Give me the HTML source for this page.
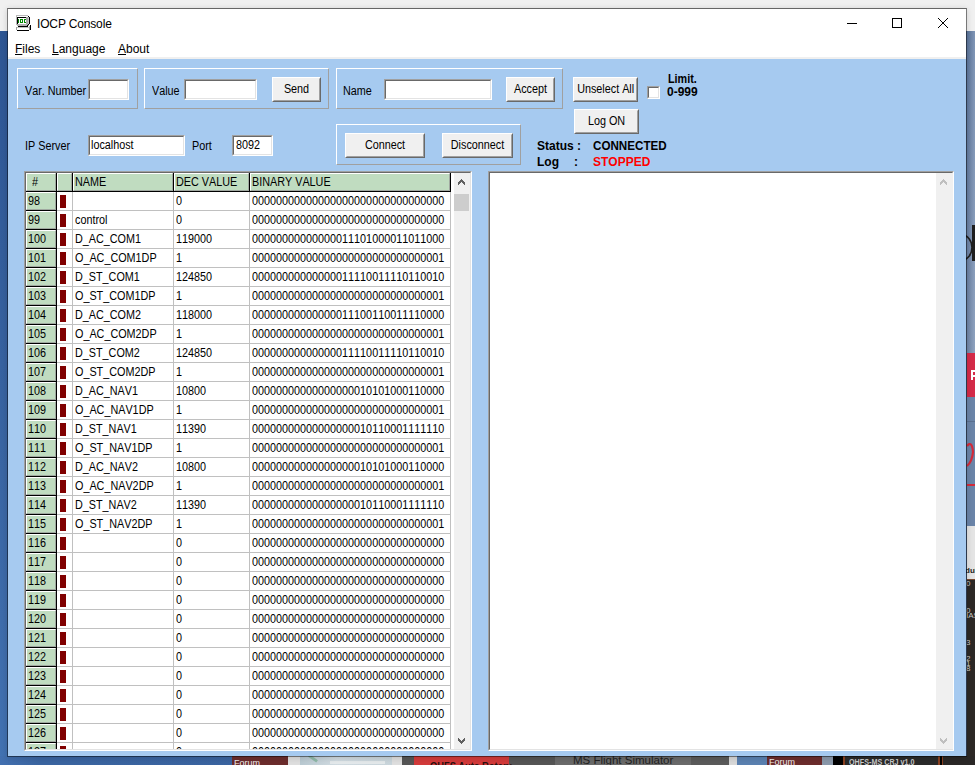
<!DOCTYPE html>
<html><head><meta charset="utf-8"><style>
html,body{margin:0;padding:0;}
body{width:975px;height:765px;overflow:hidden;position:relative;background:#3a64a0;font-family:"Liberation Sans", sans-serif;}
div{position:absolute;}
.t{font-size:12px;line-height:14px;white-space:nowrap;color:#000;font-kerning:none;transform:scaleX(0.9);transform-origin:0 0;}
.c{transform-origin:50% 0;}
.b{font-weight:bold;}
</style></head><body>

<div style="left:0;top:0;width:975px;height:31px;background:#f0f0f0"></div>
<div style="left:0;top:31px;width:8px;height:734px;background:linear-gradient(#2e5694,#3a66a4 60%,#4272b2)"></div>
<div style="left:966px;top:31px;width:9px;height:734px;background:linear-gradient(to right,#566f96,#8096b6)"></div>
<div style="left:966px;top:31px;width:9px;height:322px;background:linear-gradient(rgba(255,255,255,0),rgba(255,255,255,0.12))"></div>
<svg style="position:absolute;left:966px;top:220px" width="9" height="45" viewBox="966 220 9 45"><ellipse cx="962" cy="247.5" rx="10" ry="12.5" fill="none" stroke="#1e1e1e" stroke-width="1.6"/><rect x="972" y="225" width="3" height="36" fill="#1e1e1e"/></svg>
<div style="left:967px;top:353px;width:8px;height:44px;background:#d42a48"></div>
<div style="left:971px;top:370px;width:2px;height:10px;background:#fff"></div><div style="left:971px;top:370px;width:4px;height:2px;background:#fff"></div><div style="left:971px;top:375px;width:4px;height:2px;background:#fff"></div>
<div style="left:967px;top:397px;width:8px;height:129px;background:#6a84a8"></div>
<div style="left:967px;top:421px;width:8px;height:1px;background:#5a7090"></div>
<svg style="position:absolute;left:966px;top:440px" width="9" height="50" viewBox="966 440 9 50"><path d="M967 446 Q972 440 973 452 Q972 462 967 466" fill="none" stroke="#d42a3a" stroke-width="2.2"/><rect x="967" y="484" width="8" height="2" fill="#d42a3a"/></svg>
<div style="left:967px;top:526px;width:8px;height:53px;background:#e4e4e4"></div>
<div style="left:965px;top:566px;font-size:8px;line-height:10px;font-weight:bold;color:#222;white-space:nowrap">dul</div>
<div style="left:967px;top:579px;width:8px;height:1px;background:#7a4a30"></div>
<div style="left:967px;top:580px;width:8px;height:185px;background:#2c2826"></div>
<div style="left:966px;top:580px;font-size:8px;line-height:8px;color:#c8c8c8;white-space:nowrap">0</div>
<div style="left:966px;top:607px;font-size:8px;line-height:8px;color:#c8c8c8;white-space:nowrap">0</div>
<div style="left:966px;top:612px;font-size:8px;line-height:8px;color:#c8c8c8;white-space:nowrap">IAS</div>
<div style="left:966px;top:639px;font-size:8px;line-height:8px;color:#c8c8c8;white-space:nowrap">3</div>
<div style="left:966px;top:655px;font-size:8px;line-height:8px;color:#c8c8c8;white-space:nowrap">2</div>
<div style="left:966px;top:660px;font-size:8px;line-height:8px;color:#c8c8c8;white-space:nowrap">1</div>
<div style="left:966px;top:665px;font-size:8px;line-height:8px;color:#c8c8c8;white-space:nowrap">8</div>
<div style="left:0;top:756px;width:975px;height:9px;background:linear-gradient(to right,#4270b0,#3a64a0 40px,#38629c)"></div>
<div style="left:232px;top:756px;width:56px;height:9px;background:#6b2c2c"></div>
<div style="left:288px;top:756px;width:12px;height:9px;background:#dedede"></div>
<div style="left:300px;top:756px;width:92px;height:9px;background:linear-gradient(to right,#b8c8d0,#d0dae0 40%,#c8d4da)"></div>
<div style="left:392px;top:756px;width:10px;height:9px;background:#dedede"></div>
<div style="left:402px;top:756px;width:12px;height:9px;background:#555"></div>
<div style="left:414px;top:756px;width:95px;height:9px;background:#d23a3a"></div>
<div style="left:509px;top:756px;width:46px;height:9px;background:#555"></div>
<div style="left:555px;top:756px;width:136px;height:9px;background:#6a6a6a"></div>
<div style="left:691px;top:756px;width:38px;height:9px;background:#5a5a5a"></div>
<div style="left:729px;top:756px;width:8px;height:9px;background:#d8d8d8"></div>
<div style="left:737px;top:756px;width:30px;height:9px;background:#5a80b0"></div>
<div style="left:767px;top:756px;width:55px;height:9px;background:#6b2c2c"></div>
<div style="left:822px;top:756px;width:11px;height:9px;background:#8a98aa"></div>
<div style="left:833px;top:756px;width:10px;height:9px;background:#000"></div>
<div style="left:843px;top:756px;width:2px;height:9px;background:#8a4020"></div>
<div style="left:845px;top:756px;width:93px;height:9px;background:#2a2a2a"></div>
<div style="left:938px;top:756px;width:2px;height:9px;background:#8a4020"></div>
<div style="left:940px;top:756px;width:2px;height:9px;background:#000"></div>
<div style="left:942px;top:756px;width:1px;height:9px;background:#8a4020"></div>
<div style="left:943px;top:756px;width:32px;height:9px;background:#2a2726"></div>
<div style="left:308px;top:757px;width:10px;height:3px;background:#8fb8a8;transform:rotate(35deg)"></div>
<div style="left:330px;top:761px;width:55px;height:3px;background:#e8ecee;opacity:0.8"></div>
<div style="left:234px;top:757px;font-size:9px;line-height:12px;color:#eee;white-space:nowrap">Forum</div>
<div style="left:769px;top:756px;font-size:9px;line-height:12px;color:#eee;white-space:nowrap">Forum</div>
<div style="left:430px;top:760px;font-size:11px;line-height:12px;color:#2a1010;font-weight:bold;white-space:nowrap;transform:scaleX(0.85);transform-origin:0 0">OHFS Auto Rotary</div>
<div style="left:573px;top:753px;font-size:11.5px;line-height:14px;color:#222;white-space:nowrap">MS Flight Simulator</div>
<div style="left:849px;top:757px;font-size:9px;line-height:10px;color:#c8c8c8;font-weight:bold;white-space:nowrap;transform:scaleX(0.8);transform-origin:0 0">OHFS-MS CRJ v1.0</div>
<div style="left:7px;top:8px;width:960px;height:749px;box-sizing:border-box;border:1px solid rgba(0,0,0,0.45);border-top-color:#666;background:#a6caf0;background-clip:padding-box;box-shadow:0 1px 6px rgba(0,0,0,0.15)"></div>
<div style="left:8px;top:9px;width:958px;height:48px;background:#fff"></div>
<div style="left:8px;top:57px;width:958px;height:2px;background:#f0f0f0"></div>
<svg style="position:absolute;left:14px;top:13px" width="20" height="20" viewBox="0 0 20 20" shape-rendering="crispEdges">
<rect x="2" y="2" width="12" height="1" fill="#b8b8b8"/>
<rect x="2" y="3" width="1" height="9" fill="#b8b8b8"/>
<rect x="3" y="3" width="11" height="1" fill="#fff"/>
<rect x="3" y="4" width="10" height="8" fill="#d8d8d8"/>
<rect x="3" y="4" width="10" height="1" fill="#000"/>
<rect x="3" y="4" width="1" height="8" fill="#000"/>
<rect x="4" y="5" width="8" height="6" fill="#fff"/>
<rect x="4" y="6" width="1" height="4" fill="#080"/>
<rect x="6" y="6" width="3" height="4" fill="#080"/><rect x="7" y="7" width="1" height="2" fill="#fff"/>
<rect x="10" y="6" width="2" height="4" fill="#080"/><rect x="11" y="7" width="1" height="2" fill="#fff"/>
<rect x="12" y="4" width="2" height="8" fill="#a8a8a8"/>
<rect x="14" y="3" width="1" height="1" fill="#000"/>
<rect x="15" y="4" width="1" height="7" fill="#000"/>
<rect x="14" y="4" width="1" height="8" fill="#c8c8c8"/>
<rect x="3" y="11" width="12" height="2" fill="#b0b0b0"/>
<rect x="4" y="13" width="10" height="1" fill="#000"/>
<rect x="2" y="14" width="13" height="1" fill="#c0c0c0"/>
<rect x="2" y="15" width="13" height="2" fill="#fff"/><rect x="2" y="14" width="1" height="3" fill="#a0a0a0"/>
<rect x="3" y="17" width="12" height="1" fill="#000"/>
<rect x="16" y="12" width="1" height="5" fill="#000"/>
<rect x="15" y="13" width="1" height="4" fill="#a0a0a0"/><rect x="14" y="11" width="1" height="1" fill="#000"/><rect x="13" y="12" width="1" height="1" fill="#000"/>
</svg>
<div style="left:37px;top:17px;font-size:12px;line-height:14px;color:#000;white-space:nowrap;letter-spacing:-0.15px">IOCP Console</div>
<div style="left:847px;top:23px;width:10px;height:1px;background:#000"></div>
<div style="left:892px;top:18px;width:10px;height:10px;box-sizing:border-box;border:1px solid #000"></div>
<svg style="position:absolute;left:937px;top:17px" width="12" height="12" viewBox="0 0 12 12"><path d="M1 1L11 11M11 1L1 11" stroke="#000" stroke-width="1"/></svg>
<div style="left:15px;top:42px;font-size:12px;line-height:14px;white-space:nowrap"><span style="text-decoration:underline">F</span>iles</div>
<div style="left:52px;top:42px;font-size:12px;line-height:14px;white-space:nowrap"><span style="text-decoration:underline">L</span>anguage</div>
<div style="left:118px;top:42px;font-size:12px;line-height:14px;white-space:nowrap"><span style="text-decoration:underline">A</span>bout</div>
<div style="left:17px;top:68px;width:120px;height:40px;border-top:1px solid #fff;border-left:1px solid #fff;border-right:1px solid #a0a0a0;border-bottom:1px solid #a0a0a0;box-sizing:border-box;width:121px;height:41px"></div>
<div class="t" style="left:25px;top:84px;">Var. Number</div>
<div style="left:88px;top:79px;width:41px;height:21px;box-sizing:border-box;border-style:solid;border-width:1px;border-color:#a0a0a0 #fff #fff #a0a0a0;background:#fff"><div style="position:absolute;left:0;top:0;right:0;bottom:0;border-style:solid;border-width:1px;border-color:#696969 #e3e3e3 #e3e3e3 #696969"></div></div>
<div style="left:144px;top:68px;width:184px;height:40px;border-top:1px solid #fff;border-left:1px solid #fff;border-right:1px solid #a0a0a0;border-bottom:1px solid #a0a0a0;box-sizing:border-box;width:185px;height:41px"></div>
<div class="t" style="left:152px;top:84px;">Value</div>
<div style="left:184px;top:79px;width:73px;height:21px;box-sizing:border-box;border-style:solid;border-width:1px;border-color:#a0a0a0 #fff #fff #a0a0a0;background:#fff"><div style="position:absolute;left:0;top:0;right:0;bottom:0;border-style:solid;border-width:1px;border-color:#696969 #e3e3e3 #e3e3e3 #696969"></div></div>
<div style="left:272px;top:77px;width:49px;height:25px;box-sizing:border-box;border-style:solid;border-width:1px;border-color:#fff #696969 #696969 #fff;background:#f0f0f0"><div style="position:absolute;left:0;top:0;right:0;bottom:0;border-style:solid;border-width:1px;border-color:#f0f0f0 #a0a0a0 #a0a0a0 #f0f0f0"></div><div class="t c" style="left:0;width:47px;top:4px;text-align:center">Send</div></div>
<div style="left:336px;top:68px;width:226px;height:40px;border-top:1px solid #fff;border-left:1px solid #fff;border-right:1px solid #a0a0a0;border-bottom:1px solid #a0a0a0;box-sizing:border-box;width:227px;height:41px"></div>
<div class="t" style="left:343px;top:84px;">Name</div>
<div style="left:384px;top:79px;width:108px;height:21px;box-sizing:border-box;border-style:solid;border-width:1px;border-color:#a0a0a0 #fff #fff #a0a0a0;background:#fff"><div style="position:absolute;left:0;top:0;right:0;bottom:0;border-style:solid;border-width:1px;border-color:#696969 #e3e3e3 #e3e3e3 #696969"></div></div>
<div style="left:506px;top:77px;width:49px;height:25px;box-sizing:border-box;border-style:solid;border-width:1px;border-color:#fff #696969 #696969 #fff;background:#f0f0f0"><div style="position:absolute;left:0;top:0;right:0;bottom:0;border-style:solid;border-width:1px;border-color:#f0f0f0 #a0a0a0 #a0a0a0 #f0f0f0"></div><div class="t c" style="left:0;width:47px;top:4px;text-align:center">Accept</div></div>
<div style="left:573px;top:77px;width:65px;height:25px;box-sizing:border-box;border-style:solid;border-width:1px;border-color:#fff #696969 #696969 #fff;background:#f0f0f0"><div style="position:absolute;left:0;top:0;right:0;bottom:0;border-style:solid;border-width:1px;border-color:#f0f0f0 #a0a0a0 #a0a0a0 #f0f0f0"></div><div class="t c" style="left:0;width:63px;top:4px;text-align:center">Unselect All</div></div>
<div style="left:647px;top:86px;width:13px;height:13px;box-sizing:border-box;border-style:solid;border-width:1px;border-color:#a0a0a0 #fff #fff #a0a0a0;background:#fff"><div style="position:absolute;left:0;top:0;right:0;bottom:0;border-style:solid;border-width:1px;border-color:#696969 #e3e3e3 #e3e3e3 #696969"></div></div>
<div class="t" style="left:668px;top:72px;font-weight:bold">Limit.</div>
<div class="t" style="left:667px;top:85px;font-weight:bold;transform:scaleY(1.06);transform-origin:0 100%">0-999</div>
<div style="left:574px;top:109px;width:65px;height:25px;box-sizing:border-box;border-style:solid;border-width:1px;border-color:#fff #696969 #696969 #fff;background:#f0f0f0"><div style="position:absolute;left:0;top:0;right:0;bottom:0;border-style:solid;border-width:1px;border-color:#f0f0f0 #a0a0a0 #a0a0a0 #f0f0f0"></div><div class="t c" style="left:0;width:63px;top:4px;text-align:center">Log ON</div></div>
<div class="t" style="left:25px;top:139px;">IP Server</div>
<div style="left:88px;top:135px;width:97px;height:21px;box-sizing:border-box;border-style:solid;border-width:1px;border-color:#a0a0a0 #fff #fff #a0a0a0;background:#fff"><div style="position:absolute;left:0;top:0;right:0;bottom:0;border-style:solid;border-width:1px;border-color:#696969 #e3e3e3 #e3e3e3 #696969"></div></div>
<div class="t" style="left:91px;top:138px;">localhost</div>
<div class="t" style="left:192px;top:139px;">Port</div>
<div style="left:232px;top:135px;width:41px;height:21px;box-sizing:border-box;border-style:solid;border-width:1px;border-color:#a0a0a0 #fff #fff #a0a0a0;background:#fff"><div style="position:absolute;left:0;top:0;right:0;bottom:0;border-style:solid;border-width:1px;border-color:#696969 #e3e3e3 #e3e3e3 #696969"></div></div>
<div class="t" style="left:236px;top:138px;">8092</div>
<div style="left:336px;top:124px;width:184px;height:40px;border-top:1px solid #fff;border-left:1px solid #fff;border-right:1px solid #a0a0a0;border-bottom:1px solid #a0a0a0;box-sizing:border-box;width:185px;height:41px"></div>
<div style="left:345px;top:133px;width:80px;height:25px;box-sizing:border-box;border-style:solid;border-width:1px;border-color:#fff #696969 #696969 #fff;background:#f0f0f0"><div style="position:absolute;left:0;top:0;right:0;bottom:0;border-style:solid;border-width:1px;border-color:#f0f0f0 #a0a0a0 #a0a0a0 #f0f0f0"></div><div class="t c" style="left:0;width:78px;top:4px;text-align:center">Connect</div></div>
<div style="left:442px;top:133px;width:71px;height:25px;box-sizing:border-box;border-style:solid;border-width:1px;border-color:#fff #696969 #696969 #fff;background:#f0f0f0"><div style="position:absolute;left:0;top:0;right:0;bottom:0;border-style:solid;border-width:1px;border-color:#f0f0f0 #a0a0a0 #a0a0a0 #f0f0f0"></div><div class="t c" style="left:0;width:69px;top:4px;text-align:center">Disconnect</div></div>
<div class="t" style="left:537px;top:139px;font-weight:bold;transform:none">Status :</div>
<div class="t" style="left:593px;top:139px;font-weight:bold;transform:scaleX(0.97)">CONNECTED</div>
<div class="t" style="left:537px;top:155px;font-weight:bold;transform:none">Log</div>
<div class="t" style="left:574px;top:155px;font-weight:bold;transform:none">:</div>
<div class="t" style="left:593px;top:155px;font-weight:bold;color:#f00;transform:none">STOPPED</div>
<div style="left:24px;top:171px;width:448px;height:580px;box-sizing:border-box;border-style:solid;border-width:1px;border-color:#a0a0a0 #fff #fff #a0a0a0;background:#fff"><div style="position:absolute;left:0;top:0;right:0;bottom:0;border-style:solid;border-width:1px;border-color:#696969 #e3e3e3 #e3e3e3 #696969"></div></div>
<div style="left:26px;top:173px;width:444px;height:576px;overflow:hidden;background:#fff"><div style="left:0px;top:0px;width:30px;height:18px;background:#c0dcc0;box-sizing:border-box;border-top:1px solid #fff;border-left:1px solid #fff;border-right:1px solid #a0a8a0;border-bottom:1px solid #a0a8a0"></div><div style="left:30px;top:0px;width:1px;height:19px;background:#000"></div><div style="left:31px;top:0px;width:15px;height:18px;background:#c0dcc0;box-sizing:border-box;border-top:1px solid #fff;border-left:1px solid #fff;border-right:1px solid #a0a8a0;border-bottom:1px solid #a0a8a0"></div><div style="left:46px;top:0px;width:1px;height:19px;background:#000"></div><div style="left:47px;top:0px;width:100px;height:18px;background:#c0dcc0;box-sizing:border-box;border-top:1px solid #fff;border-left:1px solid #fff;border-right:1px solid #a0a8a0;border-bottom:1px solid #a0a8a0"></div><div style="left:147px;top:0px;width:1px;height:19px;background:#000"></div><div style="left:148px;top:0px;width:75px;height:18px;background:#c0dcc0;box-sizing:border-box;border-top:1px solid #fff;border-left:1px solid #fff;border-right:1px solid #a0a8a0;border-bottom:1px solid #a0a8a0"></div><div style="left:223px;top:0px;width:1px;height:19px;background:#000"></div><div style="left:224px;top:0px;width:200px;height:18px;background:#c0dcc0;box-sizing:border-box;border-top:1px solid #fff;border-left:1px solid #fff;border-right:1px solid #a0a8a0;border-bottom:1px solid #a0a8a0"></div><div style="left:424px;top:0px;width:1px;height:19px;background:#000"></div><div style="left:0px;top:18px;width:425px;height:1px;background:#000"></div><div class="t" style="left:6px;top:2px;">#</div><div class="t" style="left:49px;top:2px;">NAME</div><div class="t" style="left:150px;top:2px;">DEC VALUE</div><div class="t" style="left:226px;top:2px;">BINARY VALUE</div><div style="left:0px;top:19px;width:30px;height:18px;background:#c0dcc0;box-sizing:border-box;border-top:1px solid #fff;border-left:1px solid #fff;border-right:1px solid #a0a8a0;border-bottom:1px solid #a0a8a0"></div><div style="left:30px;top:19px;width:1px;height:19px;background:#000"></div><div style="left:0px;top:37px;width:31px;height:1px;background:#000"></div><div style="left:31px;top:37px;width:394px;height:1px;background:#c0c0c0"></div><div style="left:46px;top:19px;width:1px;height:19px;background:#c0c0c0"></div><div style="left:147px;top:19px;width:1px;height:19px;background:#c0c0c0"></div><div style="left:223px;top:19px;width:1px;height:19px;background:#c0c0c0"></div><div style="left:424px;top:19px;width:1px;height:19px;background:#c0c0c0"></div><div style="left:34px;top:22px;width:6px;height:13px;background:#800000"></div><div class="t" style="left:2px;top:21px;">98</div><div class="t" style="left:150px;top:21px;">0</div><div class="t" style="left:226px;top:21px;">00000000000000000000000000000000</div><div style="left:0px;top:38px;width:30px;height:18px;background:#c0dcc0;box-sizing:border-box;border-top:1px solid #fff;border-left:1px solid #fff;border-right:1px solid #a0a8a0;border-bottom:1px solid #a0a8a0"></div><div style="left:30px;top:38px;width:1px;height:19px;background:#000"></div><div style="left:0px;top:56px;width:31px;height:1px;background:#000"></div><div style="left:31px;top:56px;width:394px;height:1px;background:#c0c0c0"></div><div style="left:46px;top:38px;width:1px;height:19px;background:#c0c0c0"></div><div style="left:147px;top:38px;width:1px;height:19px;background:#c0c0c0"></div><div style="left:223px;top:38px;width:1px;height:19px;background:#c0c0c0"></div><div style="left:424px;top:38px;width:1px;height:19px;background:#c0c0c0"></div><div style="left:34px;top:41px;width:6px;height:13px;background:#800000"></div><div class="t" style="left:2px;top:40px;">99</div><div class="t" style="left:49px;top:40px;">control</div><div class="t" style="left:150px;top:40px;">0</div><div class="t" style="left:226px;top:40px;">00000000000000000000000000000000</div><div style="left:0px;top:57px;width:30px;height:18px;background:#c0dcc0;box-sizing:border-box;border-top:1px solid #fff;border-left:1px solid #fff;border-right:1px solid #a0a8a0;border-bottom:1px solid #a0a8a0"></div><div style="left:30px;top:57px;width:1px;height:19px;background:#000"></div><div style="left:0px;top:75px;width:31px;height:1px;background:#000"></div><div style="left:31px;top:75px;width:394px;height:1px;background:#c0c0c0"></div><div style="left:46px;top:57px;width:1px;height:19px;background:#c0c0c0"></div><div style="left:147px;top:57px;width:1px;height:19px;background:#c0c0c0"></div><div style="left:223px;top:57px;width:1px;height:19px;background:#c0c0c0"></div><div style="left:424px;top:57px;width:1px;height:19px;background:#c0c0c0"></div><div style="left:34px;top:60px;width:6px;height:13px;background:#800000"></div><div class="t" style="left:2px;top:59px;">100</div><div class="t" style="left:49px;top:59px;">D_AC_COM1</div><div class="t" style="left:150px;top:59px;">119000</div><div class="t" style="left:226px;top:59px;">00000000000000011101000011011000</div><div style="left:0px;top:76px;width:30px;height:18px;background:#c0dcc0;box-sizing:border-box;border-top:1px solid #fff;border-left:1px solid #fff;border-right:1px solid #a0a8a0;border-bottom:1px solid #a0a8a0"></div><div style="left:30px;top:76px;width:1px;height:19px;background:#000"></div><div style="left:0px;top:94px;width:31px;height:1px;background:#000"></div><div style="left:31px;top:94px;width:394px;height:1px;background:#c0c0c0"></div><div style="left:46px;top:76px;width:1px;height:19px;background:#c0c0c0"></div><div style="left:147px;top:76px;width:1px;height:19px;background:#c0c0c0"></div><div style="left:223px;top:76px;width:1px;height:19px;background:#c0c0c0"></div><div style="left:424px;top:76px;width:1px;height:19px;background:#c0c0c0"></div><div style="left:34px;top:79px;width:6px;height:13px;background:#800000"></div><div class="t" style="left:2px;top:78px;">101</div><div class="t" style="left:49px;top:78px;">O_AC_COM1DP</div><div class="t" style="left:150px;top:78px;">1</div><div class="t" style="left:226px;top:78px;">00000000000000000000000000000001</div><div style="left:0px;top:95px;width:30px;height:18px;background:#c0dcc0;box-sizing:border-box;border-top:1px solid #fff;border-left:1px solid #fff;border-right:1px solid #a0a8a0;border-bottom:1px solid #a0a8a0"></div><div style="left:30px;top:95px;width:1px;height:19px;background:#000"></div><div style="left:0px;top:113px;width:31px;height:1px;background:#000"></div><div style="left:31px;top:113px;width:394px;height:1px;background:#c0c0c0"></div><div style="left:46px;top:95px;width:1px;height:19px;background:#c0c0c0"></div><div style="left:147px;top:95px;width:1px;height:19px;background:#c0c0c0"></div><div style="left:223px;top:95px;width:1px;height:19px;background:#c0c0c0"></div><div style="left:424px;top:95px;width:1px;height:19px;background:#c0c0c0"></div><div style="left:34px;top:98px;width:6px;height:13px;background:#800000"></div><div class="t" style="left:2px;top:97px;">102</div><div class="t" style="left:49px;top:97px;">D_ST_COM1</div><div class="t" style="left:150px;top:97px;">124850</div><div class="t" style="left:226px;top:97px;">00000000000000011110011110110010</div><div style="left:0px;top:114px;width:30px;height:18px;background:#c0dcc0;box-sizing:border-box;border-top:1px solid #fff;border-left:1px solid #fff;border-right:1px solid #a0a8a0;border-bottom:1px solid #a0a8a0"></div><div style="left:30px;top:114px;width:1px;height:19px;background:#000"></div><div style="left:0px;top:132px;width:31px;height:1px;background:#000"></div><div style="left:31px;top:132px;width:394px;height:1px;background:#c0c0c0"></div><div style="left:46px;top:114px;width:1px;height:19px;background:#c0c0c0"></div><div style="left:147px;top:114px;width:1px;height:19px;background:#c0c0c0"></div><div style="left:223px;top:114px;width:1px;height:19px;background:#c0c0c0"></div><div style="left:424px;top:114px;width:1px;height:19px;background:#c0c0c0"></div><div style="left:34px;top:117px;width:6px;height:13px;background:#800000"></div><div class="t" style="left:2px;top:116px;">103</div><div class="t" style="left:49px;top:116px;">O_ST_COM1DP</div><div class="t" style="left:150px;top:116px;">1</div><div class="t" style="left:226px;top:116px;">00000000000000000000000000000001</div><div style="left:0px;top:133px;width:30px;height:18px;background:#c0dcc0;box-sizing:border-box;border-top:1px solid #fff;border-left:1px solid #fff;border-right:1px solid #a0a8a0;border-bottom:1px solid #a0a8a0"></div><div style="left:30px;top:133px;width:1px;height:19px;background:#000"></div><div style="left:0px;top:151px;width:31px;height:1px;background:#000"></div><div style="left:31px;top:151px;width:394px;height:1px;background:#c0c0c0"></div><div style="left:46px;top:133px;width:1px;height:19px;background:#c0c0c0"></div><div style="left:147px;top:133px;width:1px;height:19px;background:#c0c0c0"></div><div style="left:223px;top:133px;width:1px;height:19px;background:#c0c0c0"></div><div style="left:424px;top:133px;width:1px;height:19px;background:#c0c0c0"></div><div style="left:34px;top:136px;width:6px;height:13px;background:#800000"></div><div class="t" style="left:2px;top:135px;">104</div><div class="t" style="left:49px;top:135px;">D_AC_COM2</div><div class="t" style="left:150px;top:135px;">118000</div><div class="t" style="left:226px;top:135px;">00000000000000011100110011110000</div><div style="left:0px;top:152px;width:30px;height:18px;background:#c0dcc0;box-sizing:border-box;border-top:1px solid #fff;border-left:1px solid #fff;border-right:1px solid #a0a8a0;border-bottom:1px solid #a0a8a0"></div><div style="left:30px;top:152px;width:1px;height:19px;background:#000"></div><div style="left:0px;top:170px;width:31px;height:1px;background:#000"></div><div style="left:31px;top:170px;width:394px;height:1px;background:#c0c0c0"></div><div style="left:46px;top:152px;width:1px;height:19px;background:#c0c0c0"></div><div style="left:147px;top:152px;width:1px;height:19px;background:#c0c0c0"></div><div style="left:223px;top:152px;width:1px;height:19px;background:#c0c0c0"></div><div style="left:424px;top:152px;width:1px;height:19px;background:#c0c0c0"></div><div style="left:34px;top:155px;width:6px;height:13px;background:#800000"></div><div class="t" style="left:2px;top:154px;">105</div><div class="t" style="left:49px;top:154px;">O_AC_COM2DP</div><div class="t" style="left:150px;top:154px;">1</div><div class="t" style="left:226px;top:154px;">00000000000000000000000000000001</div><div style="left:0px;top:171px;width:30px;height:18px;background:#c0dcc0;box-sizing:border-box;border-top:1px solid #fff;border-left:1px solid #fff;border-right:1px solid #a0a8a0;border-bottom:1px solid #a0a8a0"></div><div style="left:30px;top:171px;width:1px;height:19px;background:#000"></div><div style="left:0px;top:189px;width:31px;height:1px;background:#000"></div><div style="left:31px;top:189px;width:394px;height:1px;background:#c0c0c0"></div><div style="left:46px;top:171px;width:1px;height:19px;background:#c0c0c0"></div><div style="left:147px;top:171px;width:1px;height:19px;background:#c0c0c0"></div><div style="left:223px;top:171px;width:1px;height:19px;background:#c0c0c0"></div><div style="left:424px;top:171px;width:1px;height:19px;background:#c0c0c0"></div><div style="left:34px;top:174px;width:6px;height:13px;background:#800000"></div><div class="t" style="left:2px;top:173px;">106</div><div class="t" style="left:49px;top:173px;">D_ST_COM2</div><div class="t" style="left:150px;top:173px;">124850</div><div class="t" style="left:226px;top:173px;">00000000000000011110011110110010</div><div style="left:0px;top:190px;width:30px;height:18px;background:#c0dcc0;box-sizing:border-box;border-top:1px solid #fff;border-left:1px solid #fff;border-right:1px solid #a0a8a0;border-bottom:1px solid #a0a8a0"></div><div style="left:30px;top:190px;width:1px;height:19px;background:#000"></div><div style="left:0px;top:208px;width:31px;height:1px;background:#000"></div><div style="left:31px;top:208px;width:394px;height:1px;background:#c0c0c0"></div><div style="left:46px;top:190px;width:1px;height:19px;background:#c0c0c0"></div><div style="left:147px;top:190px;width:1px;height:19px;background:#c0c0c0"></div><div style="left:223px;top:190px;width:1px;height:19px;background:#c0c0c0"></div><div style="left:424px;top:190px;width:1px;height:19px;background:#c0c0c0"></div><div style="left:34px;top:193px;width:6px;height:13px;background:#800000"></div><div class="t" style="left:2px;top:192px;">107</div><div class="t" style="left:49px;top:192px;">O_ST_COM2DP</div><div class="t" style="left:150px;top:192px;">1</div><div class="t" style="left:226px;top:192px;">00000000000000000000000000000001</div><div style="left:0px;top:209px;width:30px;height:18px;background:#c0dcc0;box-sizing:border-box;border-top:1px solid #fff;border-left:1px solid #fff;border-right:1px solid #a0a8a0;border-bottom:1px solid #a0a8a0"></div><div style="left:30px;top:209px;width:1px;height:19px;background:#000"></div><div style="left:0px;top:227px;width:31px;height:1px;background:#000"></div><div style="left:31px;top:227px;width:394px;height:1px;background:#c0c0c0"></div><div style="left:46px;top:209px;width:1px;height:19px;background:#c0c0c0"></div><div style="left:147px;top:209px;width:1px;height:19px;background:#c0c0c0"></div><div style="left:223px;top:209px;width:1px;height:19px;background:#c0c0c0"></div><div style="left:424px;top:209px;width:1px;height:19px;background:#c0c0c0"></div><div style="left:34px;top:212px;width:6px;height:13px;background:#800000"></div><div class="t" style="left:2px;top:211px;">108</div><div class="t" style="left:49px;top:211px;">D_AC_NAV1</div><div class="t" style="left:150px;top:211px;">10800</div><div class="t" style="left:226px;top:211px;">00000000000000000010101000110000</div><div style="left:0px;top:228px;width:30px;height:18px;background:#c0dcc0;box-sizing:border-box;border-top:1px solid #fff;border-left:1px solid #fff;border-right:1px solid #a0a8a0;border-bottom:1px solid #a0a8a0"></div><div style="left:30px;top:228px;width:1px;height:19px;background:#000"></div><div style="left:0px;top:246px;width:31px;height:1px;background:#000"></div><div style="left:31px;top:246px;width:394px;height:1px;background:#c0c0c0"></div><div style="left:46px;top:228px;width:1px;height:19px;background:#c0c0c0"></div><div style="left:147px;top:228px;width:1px;height:19px;background:#c0c0c0"></div><div style="left:223px;top:228px;width:1px;height:19px;background:#c0c0c0"></div><div style="left:424px;top:228px;width:1px;height:19px;background:#c0c0c0"></div><div style="left:34px;top:231px;width:6px;height:13px;background:#800000"></div><div class="t" style="left:2px;top:230px;">109</div><div class="t" style="left:49px;top:230px;">O_AC_NAV1DP</div><div class="t" style="left:150px;top:230px;">1</div><div class="t" style="left:226px;top:230px;">00000000000000000000000000000001</div><div style="left:0px;top:247px;width:30px;height:18px;background:#c0dcc0;box-sizing:border-box;border-top:1px solid #fff;border-left:1px solid #fff;border-right:1px solid #a0a8a0;border-bottom:1px solid #a0a8a0"></div><div style="left:30px;top:247px;width:1px;height:19px;background:#000"></div><div style="left:0px;top:265px;width:31px;height:1px;background:#000"></div><div style="left:31px;top:265px;width:394px;height:1px;background:#c0c0c0"></div><div style="left:46px;top:247px;width:1px;height:19px;background:#c0c0c0"></div><div style="left:147px;top:247px;width:1px;height:19px;background:#c0c0c0"></div><div style="left:223px;top:247px;width:1px;height:19px;background:#c0c0c0"></div><div style="left:424px;top:247px;width:1px;height:19px;background:#c0c0c0"></div><div style="left:34px;top:250px;width:6px;height:13px;background:#800000"></div><div class="t" style="left:2px;top:249px;">110</div><div class="t" style="left:49px;top:249px;">D_ST_NAV1</div><div class="t" style="left:150px;top:249px;">11390</div><div class="t" style="left:226px;top:249px;">00000000000000000010110001111110</div><div style="left:0px;top:266px;width:30px;height:18px;background:#c0dcc0;box-sizing:border-box;border-top:1px solid #fff;border-left:1px solid #fff;border-right:1px solid #a0a8a0;border-bottom:1px solid #a0a8a0"></div><div style="left:30px;top:266px;width:1px;height:19px;background:#000"></div><div style="left:0px;top:284px;width:31px;height:1px;background:#000"></div><div style="left:31px;top:284px;width:394px;height:1px;background:#c0c0c0"></div><div style="left:46px;top:266px;width:1px;height:19px;background:#c0c0c0"></div><div style="left:147px;top:266px;width:1px;height:19px;background:#c0c0c0"></div><div style="left:223px;top:266px;width:1px;height:19px;background:#c0c0c0"></div><div style="left:424px;top:266px;width:1px;height:19px;background:#c0c0c0"></div><div style="left:34px;top:269px;width:6px;height:13px;background:#800000"></div><div class="t" style="left:2px;top:268px;">111</div><div class="t" style="left:49px;top:268px;">O_ST_NAV1DP</div><div class="t" style="left:150px;top:268px;">1</div><div class="t" style="left:226px;top:268px;">00000000000000000000000000000001</div><div style="left:0px;top:285px;width:30px;height:18px;background:#c0dcc0;box-sizing:border-box;border-top:1px solid #fff;border-left:1px solid #fff;border-right:1px solid #a0a8a0;border-bottom:1px solid #a0a8a0"></div><div style="left:30px;top:285px;width:1px;height:19px;background:#000"></div><div style="left:0px;top:303px;width:31px;height:1px;background:#000"></div><div style="left:31px;top:303px;width:394px;height:1px;background:#c0c0c0"></div><div style="left:46px;top:285px;width:1px;height:19px;background:#c0c0c0"></div><div style="left:147px;top:285px;width:1px;height:19px;background:#c0c0c0"></div><div style="left:223px;top:285px;width:1px;height:19px;background:#c0c0c0"></div><div style="left:424px;top:285px;width:1px;height:19px;background:#c0c0c0"></div><div style="left:34px;top:288px;width:6px;height:13px;background:#800000"></div><div class="t" style="left:2px;top:287px;">112</div><div class="t" style="left:49px;top:287px;">D_AC_NAV2</div><div class="t" style="left:150px;top:287px;">10800</div><div class="t" style="left:226px;top:287px;">00000000000000000010101000110000</div><div style="left:0px;top:304px;width:30px;height:18px;background:#c0dcc0;box-sizing:border-box;border-top:1px solid #fff;border-left:1px solid #fff;border-right:1px solid #a0a8a0;border-bottom:1px solid #a0a8a0"></div><div style="left:30px;top:304px;width:1px;height:19px;background:#000"></div><div style="left:0px;top:322px;width:31px;height:1px;background:#000"></div><div style="left:31px;top:322px;width:394px;height:1px;background:#c0c0c0"></div><div style="left:46px;top:304px;width:1px;height:19px;background:#c0c0c0"></div><div style="left:147px;top:304px;width:1px;height:19px;background:#c0c0c0"></div><div style="left:223px;top:304px;width:1px;height:19px;background:#c0c0c0"></div><div style="left:424px;top:304px;width:1px;height:19px;background:#c0c0c0"></div><div style="left:34px;top:307px;width:6px;height:13px;background:#800000"></div><div class="t" style="left:2px;top:306px;">113</div><div class="t" style="left:49px;top:306px;">O_AC_NAV2DP</div><div class="t" style="left:150px;top:306px;">1</div><div class="t" style="left:226px;top:306px;">00000000000000000000000000000001</div><div style="left:0px;top:323px;width:30px;height:18px;background:#c0dcc0;box-sizing:border-box;border-top:1px solid #fff;border-left:1px solid #fff;border-right:1px solid #a0a8a0;border-bottom:1px solid #a0a8a0"></div><div style="left:30px;top:323px;width:1px;height:19px;background:#000"></div><div style="left:0px;top:341px;width:31px;height:1px;background:#000"></div><div style="left:31px;top:341px;width:394px;height:1px;background:#c0c0c0"></div><div style="left:46px;top:323px;width:1px;height:19px;background:#c0c0c0"></div><div style="left:147px;top:323px;width:1px;height:19px;background:#c0c0c0"></div><div style="left:223px;top:323px;width:1px;height:19px;background:#c0c0c0"></div><div style="left:424px;top:323px;width:1px;height:19px;background:#c0c0c0"></div><div style="left:34px;top:326px;width:6px;height:13px;background:#800000"></div><div class="t" style="left:2px;top:325px;">114</div><div class="t" style="left:49px;top:325px;">D_ST_NAV2</div><div class="t" style="left:150px;top:325px;">11390</div><div class="t" style="left:226px;top:325px;">00000000000000000010110001111110</div><div style="left:0px;top:342px;width:30px;height:18px;background:#c0dcc0;box-sizing:border-box;border-top:1px solid #fff;border-left:1px solid #fff;border-right:1px solid #a0a8a0;border-bottom:1px solid #a0a8a0"></div><div style="left:30px;top:342px;width:1px;height:19px;background:#000"></div><div style="left:0px;top:360px;width:31px;height:1px;background:#000"></div><div style="left:31px;top:360px;width:394px;height:1px;background:#c0c0c0"></div><div style="left:46px;top:342px;width:1px;height:19px;background:#c0c0c0"></div><div style="left:147px;top:342px;width:1px;height:19px;background:#c0c0c0"></div><div style="left:223px;top:342px;width:1px;height:19px;background:#c0c0c0"></div><div style="left:424px;top:342px;width:1px;height:19px;background:#c0c0c0"></div><div style="left:34px;top:345px;width:6px;height:13px;background:#800000"></div><div class="t" style="left:2px;top:344px;">115</div><div class="t" style="left:49px;top:344px;">O_ST_NAV2DP</div><div class="t" style="left:150px;top:344px;">1</div><div class="t" style="left:226px;top:344px;">00000000000000000000000000000001</div><div style="left:0px;top:361px;width:30px;height:18px;background:#c0dcc0;box-sizing:border-box;border-top:1px solid #fff;border-left:1px solid #fff;border-right:1px solid #a0a8a0;border-bottom:1px solid #a0a8a0"></div><div style="left:30px;top:361px;width:1px;height:19px;background:#000"></div><div style="left:0px;top:379px;width:31px;height:1px;background:#000"></div><div style="left:31px;top:379px;width:394px;height:1px;background:#c0c0c0"></div><div style="left:46px;top:361px;width:1px;height:19px;background:#c0c0c0"></div><div style="left:147px;top:361px;width:1px;height:19px;background:#c0c0c0"></div><div style="left:223px;top:361px;width:1px;height:19px;background:#c0c0c0"></div><div style="left:424px;top:361px;width:1px;height:19px;background:#c0c0c0"></div><div style="left:34px;top:364px;width:6px;height:13px;background:#800000"></div><div class="t" style="left:2px;top:363px;">116</div><div class="t" style="left:150px;top:363px;">0</div><div class="t" style="left:226px;top:363px;">00000000000000000000000000000000</div><div style="left:0px;top:380px;width:30px;height:18px;background:#c0dcc0;box-sizing:border-box;border-top:1px solid #fff;border-left:1px solid #fff;border-right:1px solid #a0a8a0;border-bottom:1px solid #a0a8a0"></div><div style="left:30px;top:380px;width:1px;height:19px;background:#000"></div><div style="left:0px;top:398px;width:31px;height:1px;background:#000"></div><div style="left:31px;top:398px;width:394px;height:1px;background:#c0c0c0"></div><div style="left:46px;top:380px;width:1px;height:19px;background:#c0c0c0"></div><div style="left:147px;top:380px;width:1px;height:19px;background:#c0c0c0"></div><div style="left:223px;top:380px;width:1px;height:19px;background:#c0c0c0"></div><div style="left:424px;top:380px;width:1px;height:19px;background:#c0c0c0"></div><div style="left:34px;top:383px;width:6px;height:13px;background:#800000"></div><div class="t" style="left:2px;top:382px;">117</div><div class="t" style="left:150px;top:382px;">0</div><div class="t" style="left:226px;top:382px;">00000000000000000000000000000000</div><div style="left:0px;top:399px;width:30px;height:18px;background:#c0dcc0;box-sizing:border-box;border-top:1px solid #fff;border-left:1px solid #fff;border-right:1px solid #a0a8a0;border-bottom:1px solid #a0a8a0"></div><div style="left:30px;top:399px;width:1px;height:19px;background:#000"></div><div style="left:0px;top:417px;width:31px;height:1px;background:#000"></div><div style="left:31px;top:417px;width:394px;height:1px;background:#c0c0c0"></div><div style="left:46px;top:399px;width:1px;height:19px;background:#c0c0c0"></div><div style="left:147px;top:399px;width:1px;height:19px;background:#c0c0c0"></div><div style="left:223px;top:399px;width:1px;height:19px;background:#c0c0c0"></div><div style="left:424px;top:399px;width:1px;height:19px;background:#c0c0c0"></div><div style="left:34px;top:402px;width:6px;height:13px;background:#800000"></div><div class="t" style="left:2px;top:401px;">118</div><div class="t" style="left:150px;top:401px;">0</div><div class="t" style="left:226px;top:401px;">00000000000000000000000000000000</div><div style="left:0px;top:418px;width:30px;height:18px;background:#c0dcc0;box-sizing:border-box;border-top:1px solid #fff;border-left:1px solid #fff;border-right:1px solid #a0a8a0;border-bottom:1px solid #a0a8a0"></div><div style="left:30px;top:418px;width:1px;height:19px;background:#000"></div><div style="left:0px;top:436px;width:31px;height:1px;background:#000"></div><div style="left:31px;top:436px;width:394px;height:1px;background:#c0c0c0"></div><div style="left:46px;top:418px;width:1px;height:19px;background:#c0c0c0"></div><div style="left:147px;top:418px;width:1px;height:19px;background:#c0c0c0"></div><div style="left:223px;top:418px;width:1px;height:19px;background:#c0c0c0"></div><div style="left:424px;top:418px;width:1px;height:19px;background:#c0c0c0"></div><div style="left:34px;top:421px;width:6px;height:13px;background:#800000"></div><div class="t" style="left:2px;top:420px;">119</div><div class="t" style="left:150px;top:420px;">0</div><div class="t" style="left:226px;top:420px;">00000000000000000000000000000000</div><div style="left:0px;top:437px;width:30px;height:18px;background:#c0dcc0;box-sizing:border-box;border-top:1px solid #fff;border-left:1px solid #fff;border-right:1px solid #a0a8a0;border-bottom:1px solid #a0a8a0"></div><div style="left:30px;top:437px;width:1px;height:19px;background:#000"></div><div style="left:0px;top:455px;width:31px;height:1px;background:#000"></div><div style="left:31px;top:455px;width:394px;height:1px;background:#c0c0c0"></div><div style="left:46px;top:437px;width:1px;height:19px;background:#c0c0c0"></div><div style="left:147px;top:437px;width:1px;height:19px;background:#c0c0c0"></div><div style="left:223px;top:437px;width:1px;height:19px;background:#c0c0c0"></div><div style="left:424px;top:437px;width:1px;height:19px;background:#c0c0c0"></div><div style="left:34px;top:440px;width:6px;height:13px;background:#800000"></div><div class="t" style="left:2px;top:439px;">120</div><div class="t" style="left:150px;top:439px;">0</div><div class="t" style="left:226px;top:439px;">00000000000000000000000000000000</div><div style="left:0px;top:456px;width:30px;height:18px;background:#c0dcc0;box-sizing:border-box;border-top:1px solid #fff;border-left:1px solid #fff;border-right:1px solid #a0a8a0;border-bottom:1px solid #a0a8a0"></div><div style="left:30px;top:456px;width:1px;height:19px;background:#000"></div><div style="left:0px;top:474px;width:31px;height:1px;background:#000"></div><div style="left:31px;top:474px;width:394px;height:1px;background:#c0c0c0"></div><div style="left:46px;top:456px;width:1px;height:19px;background:#c0c0c0"></div><div style="left:147px;top:456px;width:1px;height:19px;background:#c0c0c0"></div><div style="left:223px;top:456px;width:1px;height:19px;background:#c0c0c0"></div><div style="left:424px;top:456px;width:1px;height:19px;background:#c0c0c0"></div><div style="left:34px;top:459px;width:6px;height:13px;background:#800000"></div><div class="t" style="left:2px;top:458px;">121</div><div class="t" style="left:150px;top:458px;">0</div><div class="t" style="left:226px;top:458px;">00000000000000000000000000000000</div><div style="left:0px;top:475px;width:30px;height:18px;background:#c0dcc0;box-sizing:border-box;border-top:1px solid #fff;border-left:1px solid #fff;border-right:1px solid #a0a8a0;border-bottom:1px solid #a0a8a0"></div><div style="left:30px;top:475px;width:1px;height:19px;background:#000"></div><div style="left:0px;top:493px;width:31px;height:1px;background:#000"></div><div style="left:31px;top:493px;width:394px;height:1px;background:#c0c0c0"></div><div style="left:46px;top:475px;width:1px;height:19px;background:#c0c0c0"></div><div style="left:147px;top:475px;width:1px;height:19px;background:#c0c0c0"></div><div style="left:223px;top:475px;width:1px;height:19px;background:#c0c0c0"></div><div style="left:424px;top:475px;width:1px;height:19px;background:#c0c0c0"></div><div style="left:34px;top:478px;width:6px;height:13px;background:#800000"></div><div class="t" style="left:2px;top:477px;">122</div><div class="t" style="left:150px;top:477px;">0</div><div class="t" style="left:226px;top:477px;">00000000000000000000000000000000</div><div style="left:0px;top:494px;width:30px;height:18px;background:#c0dcc0;box-sizing:border-box;border-top:1px solid #fff;border-left:1px solid #fff;border-right:1px solid #a0a8a0;border-bottom:1px solid #a0a8a0"></div><div style="left:30px;top:494px;width:1px;height:19px;background:#000"></div><div style="left:0px;top:512px;width:31px;height:1px;background:#000"></div><div style="left:31px;top:512px;width:394px;height:1px;background:#c0c0c0"></div><div style="left:46px;top:494px;width:1px;height:19px;background:#c0c0c0"></div><div style="left:147px;top:494px;width:1px;height:19px;background:#c0c0c0"></div><div style="left:223px;top:494px;width:1px;height:19px;background:#c0c0c0"></div><div style="left:424px;top:494px;width:1px;height:19px;background:#c0c0c0"></div><div style="left:34px;top:497px;width:6px;height:13px;background:#800000"></div><div class="t" style="left:2px;top:496px;">123</div><div class="t" style="left:150px;top:496px;">0</div><div class="t" style="left:226px;top:496px;">00000000000000000000000000000000</div><div style="left:0px;top:513px;width:30px;height:18px;background:#c0dcc0;box-sizing:border-box;border-top:1px solid #fff;border-left:1px solid #fff;border-right:1px solid #a0a8a0;border-bottom:1px solid #a0a8a0"></div><div style="left:30px;top:513px;width:1px;height:19px;background:#000"></div><div style="left:0px;top:531px;width:31px;height:1px;background:#000"></div><div style="left:31px;top:531px;width:394px;height:1px;background:#c0c0c0"></div><div style="left:46px;top:513px;width:1px;height:19px;background:#c0c0c0"></div><div style="left:147px;top:513px;width:1px;height:19px;background:#c0c0c0"></div><div style="left:223px;top:513px;width:1px;height:19px;background:#c0c0c0"></div><div style="left:424px;top:513px;width:1px;height:19px;background:#c0c0c0"></div><div style="left:34px;top:516px;width:6px;height:13px;background:#800000"></div><div class="t" style="left:2px;top:515px;">124</div><div class="t" style="left:150px;top:515px;">0</div><div class="t" style="left:226px;top:515px;">00000000000000000000000000000000</div><div style="left:0px;top:532px;width:30px;height:18px;background:#c0dcc0;box-sizing:border-box;border-top:1px solid #fff;border-left:1px solid #fff;border-right:1px solid #a0a8a0;border-bottom:1px solid #a0a8a0"></div><div style="left:30px;top:532px;width:1px;height:19px;background:#000"></div><div style="left:0px;top:550px;width:31px;height:1px;background:#000"></div><div style="left:31px;top:550px;width:394px;height:1px;background:#c0c0c0"></div><div style="left:46px;top:532px;width:1px;height:19px;background:#c0c0c0"></div><div style="left:147px;top:532px;width:1px;height:19px;background:#c0c0c0"></div><div style="left:223px;top:532px;width:1px;height:19px;background:#c0c0c0"></div><div style="left:424px;top:532px;width:1px;height:19px;background:#c0c0c0"></div><div style="left:34px;top:535px;width:6px;height:13px;background:#800000"></div><div class="t" style="left:2px;top:534px;">125</div><div class="t" style="left:150px;top:534px;">0</div><div class="t" style="left:226px;top:534px;">00000000000000000000000000000000</div><div style="left:0px;top:551px;width:30px;height:18px;background:#c0dcc0;box-sizing:border-box;border-top:1px solid #fff;border-left:1px solid #fff;border-right:1px solid #a0a8a0;border-bottom:1px solid #a0a8a0"></div><div style="left:30px;top:551px;width:1px;height:19px;background:#000"></div><div style="left:0px;top:569px;width:31px;height:1px;background:#000"></div><div style="left:31px;top:569px;width:394px;height:1px;background:#c0c0c0"></div><div style="left:46px;top:551px;width:1px;height:19px;background:#c0c0c0"></div><div style="left:147px;top:551px;width:1px;height:19px;background:#c0c0c0"></div><div style="left:223px;top:551px;width:1px;height:19px;background:#c0c0c0"></div><div style="left:424px;top:551px;width:1px;height:19px;background:#c0c0c0"></div><div style="left:34px;top:554px;width:6px;height:13px;background:#800000"></div><div class="t" style="left:2px;top:553px;">126</div><div class="t" style="left:150px;top:553px;">0</div><div class="t" style="left:226px;top:553px;">00000000000000000000000000000000</div><div style="left:0px;top:570px;width:30px;height:18px;background:#c0dcc0;box-sizing:border-box;border-top:1px solid #fff;border-left:1px solid #fff;border-right:1px solid #a0a8a0;border-bottom:1px solid #a0a8a0"></div><div style="left:30px;top:570px;width:1px;height:19px;background:#000"></div><div style="left:0px;top:588px;width:31px;height:1px;background:#000"></div><div style="left:31px;top:588px;width:394px;height:1px;background:#c0c0c0"></div><div style="left:46px;top:570px;width:1px;height:19px;background:#c0c0c0"></div><div style="left:147px;top:570px;width:1px;height:19px;background:#c0c0c0"></div><div style="left:223px;top:570px;width:1px;height:19px;background:#c0c0c0"></div><div style="left:424px;top:570px;width:1px;height:19px;background:#c0c0c0"></div><div style="left:34px;top:573px;width:6px;height:13px;background:#800000"></div><div class="t" style="left:2px;top:572px;">127</div><div class="t" style="left:150px;top:572px;">0</div><div class="t" style="left:226px;top:572px;">00000000000000000000000000000000</div></div>
<div style="left:454px;top:173px;width:16px;height:576px;background:#f0f0f0"></div>
<div style="left:454px;top:194px;width:15px;height:17px;background:#cdcdcd"></div>
<svg style="position:absolute;left:458px;top:179px" width="7" height="6" viewBox="0 0 7 6" shape-rendering="crispEdges" fill="#606060"><rect x="0" y="3" width="1" height="1"/><rect x="0" y="4" width="1" height="1"/><rect x="0" y="5" width="1" height="1"/><rect x="1" y="2" width="1" height="1"/><rect x="1" y="3" width="1" height="1"/><rect x="1" y="4" width="1" height="1"/><rect x="2" y="1" width="1" height="1"/><rect x="2" y="2" width="1" height="1"/><rect x="2" y="3" width="1" height="1"/><rect x="3" y="0" width="1" height="1"/><rect x="3" y="1" width="1" height="1"/><rect x="3" y="2" width="1" height="1"/><rect x="4" y="1" width="1" height="1"/><rect x="4" y="2" width="1" height="1"/><rect x="4" y="3" width="1" height="1"/><rect x="5" y="2" width="1" height="1"/><rect x="5" y="3" width="1" height="1"/><rect x="5" y="4" width="1" height="1"/><rect x="6" y="3" width="1" height="1"/><rect x="6" y="4" width="1" height="1"/><rect x="6" y="5" width="1" height="1"/></svg>
<svg style="position:absolute;left:458px;top:738px" width="7" height="6" viewBox="0 0 7 6" shape-rendering="crispEdges" fill="#606060"><rect x="0" y="2" width="1" height="1"/><rect x="0" y="1" width="1" height="1"/><rect x="0" y="0" width="1" height="1"/><rect x="1" y="3" width="1" height="1"/><rect x="1" y="2" width="1" height="1"/><rect x="1" y="1" width="1" height="1"/><rect x="2" y="4" width="1" height="1"/><rect x="2" y="3" width="1" height="1"/><rect x="2" y="2" width="1" height="1"/><rect x="3" y="5" width="1" height="1"/><rect x="3" y="4" width="1" height="1"/><rect x="3" y="3" width="1" height="1"/><rect x="4" y="4" width="1" height="1"/><rect x="4" y="3" width="1" height="1"/><rect x="4" y="2" width="1" height="1"/><rect x="5" y="3" width="1" height="1"/><rect x="5" y="2" width="1" height="1"/><rect x="5" y="1" width="1" height="1"/><rect x="6" y="2" width="1" height="1"/><rect x="6" y="1" width="1" height="1"/><rect x="6" y="0" width="1" height="1"/></svg>
<div style="left:488px;top:171px;width:466px;height:580px;box-sizing:border-box;border-style:solid;border-width:1px;border-color:#a0a0a0 #fff #fff #a0a0a0;background:#fff"><div style="position:absolute;left:0;top:0;right:0;bottom:0;border-style:solid;border-width:1px;border-color:#696969 #e3e3e3 #e3e3e3 #696969"></div></div>
<div style="left:936px;top:173px;width:17px;height:576px;background:#f0f0f0"></div>
<svg style="position:absolute;left:940px;top:179px" width="7" height="6" viewBox="0 0 7 6" shape-rendering="crispEdges" fill="#bfbfbf"><rect x="0" y="3" width="1" height="1"/><rect x="0" y="4" width="1" height="1"/><rect x="0" y="5" width="1" height="1"/><rect x="1" y="2" width="1" height="1"/><rect x="1" y="3" width="1" height="1"/><rect x="1" y="4" width="1" height="1"/><rect x="2" y="1" width="1" height="1"/><rect x="2" y="2" width="1" height="1"/><rect x="2" y="3" width="1" height="1"/><rect x="3" y="0" width="1" height="1"/><rect x="3" y="1" width="1" height="1"/><rect x="3" y="2" width="1" height="1"/><rect x="4" y="1" width="1" height="1"/><rect x="4" y="2" width="1" height="1"/><rect x="4" y="3" width="1" height="1"/><rect x="5" y="2" width="1" height="1"/><rect x="5" y="3" width="1" height="1"/><rect x="5" y="4" width="1" height="1"/><rect x="6" y="3" width="1" height="1"/><rect x="6" y="4" width="1" height="1"/><rect x="6" y="5" width="1" height="1"/></svg>
<svg style="position:absolute;left:940px;top:738px" width="7" height="6" viewBox="0 0 7 6" shape-rendering="crispEdges" fill="#bfbfbf"><rect x="0" y="2" width="1" height="1"/><rect x="0" y="1" width="1" height="1"/><rect x="0" y="0" width="1" height="1"/><rect x="1" y="3" width="1" height="1"/><rect x="1" y="2" width="1" height="1"/><rect x="1" y="1" width="1" height="1"/><rect x="2" y="4" width="1" height="1"/><rect x="2" y="3" width="1" height="1"/><rect x="2" y="2" width="1" height="1"/><rect x="3" y="5" width="1" height="1"/><rect x="3" y="4" width="1" height="1"/><rect x="3" y="3" width="1" height="1"/><rect x="4" y="4" width="1" height="1"/><rect x="4" y="3" width="1" height="1"/><rect x="4" y="2" width="1" height="1"/><rect x="5" y="3" width="1" height="1"/><rect x="5" y="2" width="1" height="1"/><rect x="5" y="1" width="1" height="1"/><rect x="6" y="2" width="1" height="1"/><rect x="6" y="1" width="1" height="1"/><rect x="6" y="0" width="1" height="1"/></svg>
</body></html>
